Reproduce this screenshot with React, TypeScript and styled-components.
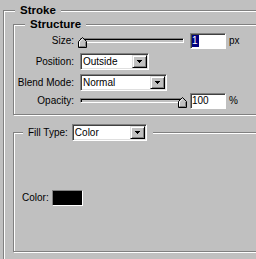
import React from "react";
import styled, { createGlobalStyle } from "styled-components";

const Global = createGlobalStyle`
  html, body { margin: 0; padding: 0; background: #c0c0c0; }
  body {
    font-family: "Liberation Sans", Arial, sans-serif;
    font-size: 10px;
    color: #000;
  }
`;

const Screen = styled.div`
  width: 256px;
  height: 259px;
  overflow: hidden;
  background: #c0c0c0;
  box-sizing: border-box;
  padding: 10px 0 0 3px;
`;

const Group = styled.div<{ $w: number; $h: number; $pt: number; $pl: number; $mt?: number }>`
  position: relative;
  box-sizing: border-box;
  width: ${(p) => p.$w}px;
  height: ${(p) => p.$h}px;
  margin-top: ${(p) => p.$mt ?? 0}px;
  padding: ${(p) => p.$pt}px 0 0 ${(p) => p.$pl}px;
  border: 1px solid #808080;
  box-shadow: inset 1px 1px 0 #fff, 1px 1px 0 #fff;
`;

const Legend = styled.div<{ $top: number; $left: number; $h: number }>`
  position: absolute;
  top: ${(p) => p.$top}px;
  left: ${(p) => p.$left}px;
  height: ${(p) => p.$h}px;
  line-height: ${(p) => p.$h}px;
  padding: 0 5px;
  background: #c0c0c0;
  font-weight: bold;
  font-size: 11.5px;
  display: flex;
  align-items: center;
  white-space: nowrap;
`;

const FillLegend = styled(Legend)`
  font-weight: normal;
  font-size: 10px;
  padding: 0 6px 0 5px;
`;

const Row = styled.div<{ $mt: number }>`
  display: flex;
  align-items: center;
  height: 17px;
  margin-top: ${(p) => p.$mt}px;
`;

const Label = styled.div`
  width: 60px;
  text-align: right;
  margin-right: 6px;
  white-space: nowrap;
`;

const InlineLabel = styled.span<{ $mr: number }>`
  margin-right: ${(p) => p.$mr}px;
  white-space: nowrap;
`;

const SliderBox = styled.div`
  position: relative;
  width: 104px;
  height: 17px;
  display: flex;
  align-items: center;
`;

const Track = styled.div`
  box-sizing: border-box;
  width: 100%;
  height: 5px;
  border: 1px solid;
  border-color: #808080 #fff #fff #808080;
  box-shadow: inset 1px 1px 0 #000;
  background: #c0c0c0;
`;

const Thumb = styled.svg`
  position: absolute;
  top: 5px;
  display: block;
`;

const Field = styled.div`
  box-sizing: border-box;
  width: 36px;
  height: 16px;
  margin-left: 6px;
  padding: 1px 0 0 1px;
  background: #fff;
  border: 1px solid;
  border-color: #808080 #fff #fff #808080;
  box-shadow: inset 1px 1px 0 #404040;
  line-height: 12px;
  white-space: nowrap;
`;

const Selected = styled.span`
  display: inline-block;
  background: #000080;
  color: #fff;
  padding: 0 1px 0 0;
  line-height: 12px;
`;

const Unit = styled.span`
  margin-left: 3px;
`;

const Select = styled.div<{ $w: number }>`
  box-sizing: border-box;
  width: ${(p) => p.$w}px;
  height: 17px;
  background: #fff;
  border: 1px solid;
  border-color: #808080 #fff #fff #808080;
  box-shadow: inset 1px 1px 0 #404040, inset -1px -1px 0 #dfdfdf;
  padding: 1px 1px 1px 2px;
  display: flex;
  align-items: center;
  justify-content: space-between;
  white-space: nowrap;
`;

const DropButton = styled.div`
  box-sizing: border-box;
  width: 15px;
  height: 13px;
  background: #c0c0c0;
  border: 1px solid;
  border-color: #dfdfdf #000 #000 #dfdfdf;
  box-shadow: inset 1px 1px 0 #fff, inset -1px -1px 0 #808080;
  display: flex;
  align-items: center;
  justify-content: center;
`;

const Swatch = styled.div`
  box-sizing: border-box;
  width: 31px;
  height: 16px;
  background: #000;
  border: 1px solid;
  border-color: #808080 #fff #fff #808080;
`;

const Arrow = () => (
  <svg width="5" height="3" viewBox="0 0 5 3" style={{ display: "block" }}>
    <path d="M0 0h5v1H0z M1 1h3v1H1z M2 2h1v1H2z" fill="#000" />
  </svg>
);

const ComboBox = ({ w, value }: { w: number; value: string }) => (
  <Select $w={w}>
    <span>{value}</span>
    <DropButton>
      <Arrow />
    </DropButton>
  </Select>
);

const Slider = ({ pos }: { pos: number }) => (
  <SliderBox>
    <Track />
    <Thumb width="9" height="11" viewBox="0 0 9 11" style={{ left: pos }}>
      <polygon points="0.5,10.5 0.5,4.5 4.5,0.5 8.5,4.5 8.5,10.5" fill="#c0c0c0" stroke="#000" />
      <polyline points="1.5,9.5 1.5,4.9 4.5,1.9" fill="none" stroke="#fff" />
      <polyline points="1.5,9.5 7.5,9.5 7.5,4.9" fill="none" stroke="#808080" />
    </Thumb>
  </SliderBox>
);

export default function App() {
  return (
    <>
      <Global />
      <Screen>
        <Group $w={300} $h={300} $pt={13} $pl={9}>
          <Legend $top={-8} $left={11} $h={14}>Stroke</Legend>

          <Group $w={280} $h={91} $pt={7} $pl={0}>
            <Legend $top={-8} $left={11} $h={14}>Structure</Legend>
            <Row $mt={0}>
              <Label>Size:</Label>
              <Slider pos={-2} />
              <Field>
                <Selected>1</Selected>
              </Field>
              <Unit>px</Unit>
            </Row>
            <Row $mt={4}>
              <Label>Position:</Label>
              <ComboBox w={69} value="Outside" />
            </Row>
            <Row $mt={4}>
              <Label>Blend Mode:</Label>
              <ComboBox w={87} value="Normal" />
            </Row>
            <Row $mt={1}>
              <Label>Opacity:</Label>
              <Slider pos={98} />
              <Field>100</Field>
              <Unit>%</Unit>
            </Row>
          </Group>

          <Group $w={280} $h={120} $pt={56} $pl={8} $mt={17}>
            <FillLegend $top={-9} $left={9} $h={17}>
              <InlineLabel $mr={4}>Fill Type:</InlineLabel>
              <ComboBox w={75} value="Color" />
            </FillLegend>
            <Row $mt={0}>
              <InlineLabel $mr={3}>Color:</InlineLabel>
              <Swatch />
            </Row>
          </Group>
        </Group>
      </Screen>
    </>
  );
}
